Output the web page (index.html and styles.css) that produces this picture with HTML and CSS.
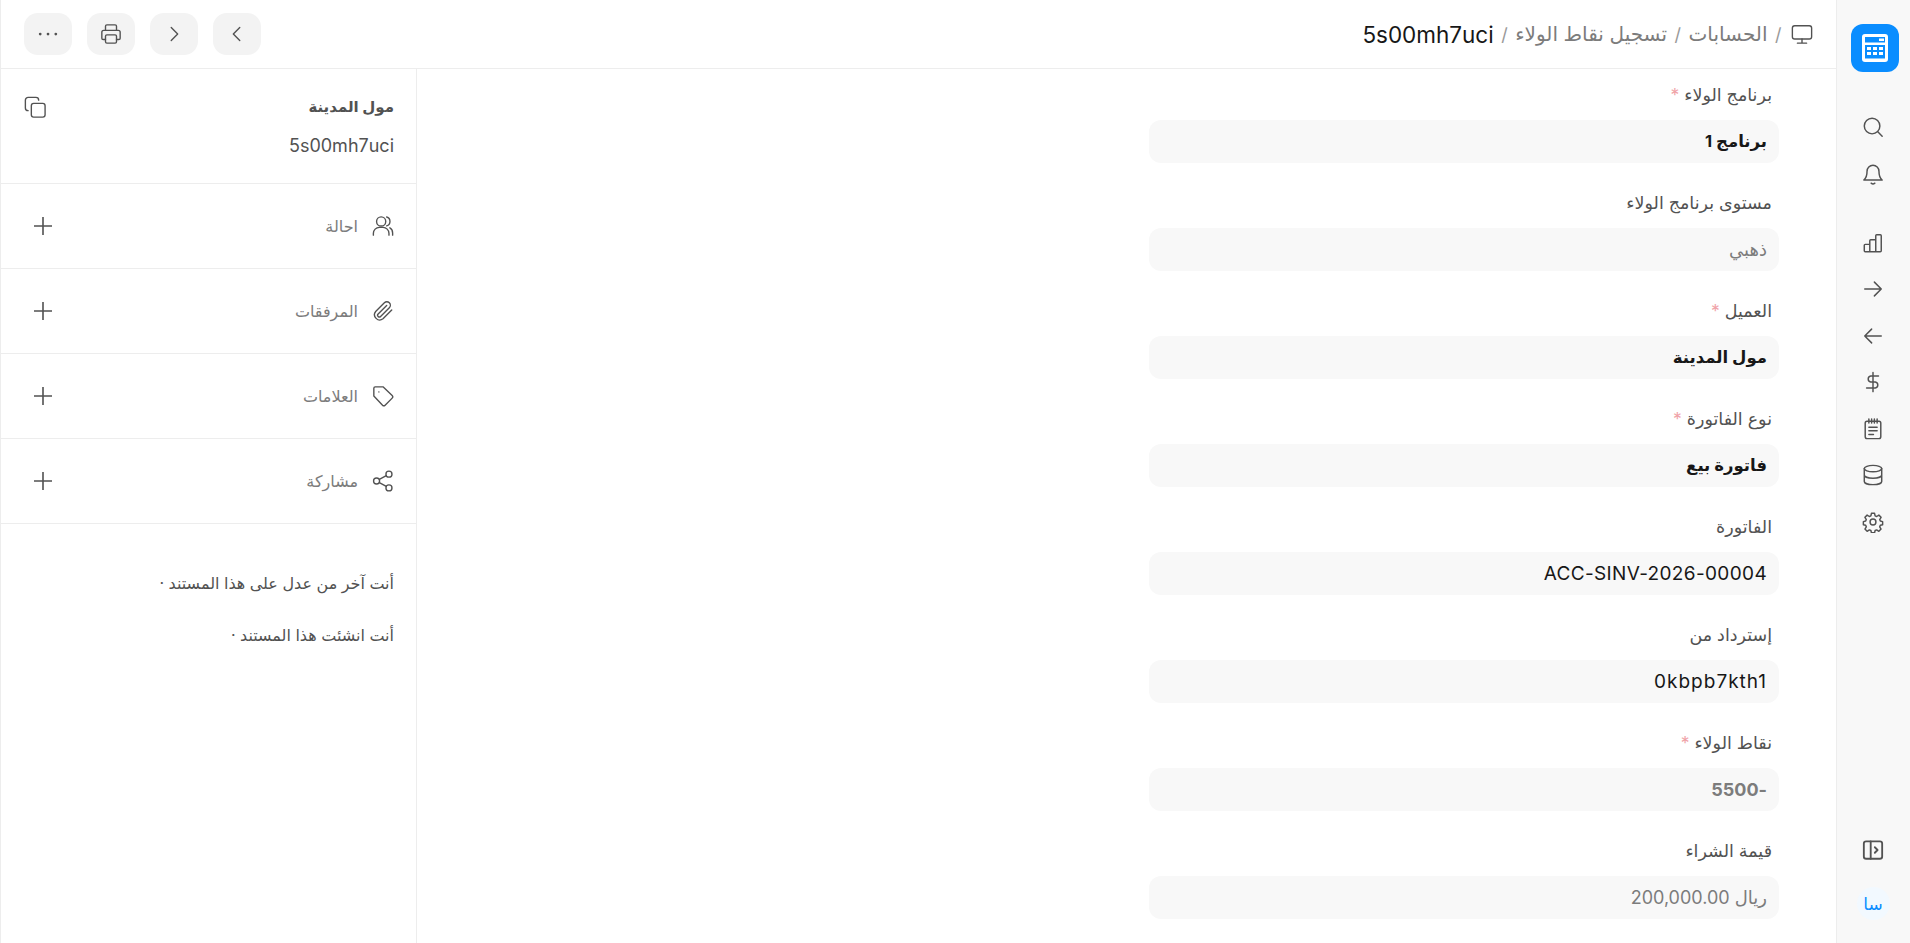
FILE: index.html
```html
<!DOCTYPE html>
<html lang="ar" dir="rtl">
<head>
  <meta charset="UTF-8">
  <meta name="viewport" content="width=device-width, initial-scale=1.0">
  <title>5s00mh7uci</title>
  <link rel="stylesheet" href="styles.css">
</head>
<body>
  <div class="app">
    <aside class="rail">
      <div class="logo">
        <svg width="32" height="32" viewBox="0 0 32 32" fill="none">
          <rect x="3" y="2" width="26" height="28" rx="3" fill="#fff"/>
          <rect x="6" y="5" width="20" height="5.5" fill="#0a8dff"/>
          <rect x="20" y="6.5" width="5" height="2.5" fill="#fff"/>
          <path d="M6 13h20v13.5H6z" fill="#0a8dff"/>
          <path d="M8 15h4v3H8zM14 15h4v3h-4zM20 15h4v3h-4zM8 20h4v3H8zM14 20h4v3h-4zM20 20h4v3h-4z" fill="#fff"/>
        </svg>
      </div>
      <div class="rail-group rail-top">
        <span class="rail-icon"><svg viewBox="0 0 24 24"><circle cx="11" cy="11" r="8.5"/><path d="M17.5 17.5 22 22"/></svg></span>
        <span class="rail-icon"><svg viewBox="0 0 24 24"><path d="M5.500 9a6.500 6.500 0 0 1 13 0c0 5 1 7.500 3.500 9.500H2c2.500-2 3.500-4.500 3.500-9.500z"/><path d="M10 22c1 .8 3 .8 4 0"/></svg></span>
      </div>
      <div class="rail-group rail-mid">
        <span class="rail-icon"><svg viewBox="0 0 24 24"><path d="M2.500 20.500v-6a1 1 0 0 1 1-1h5v8h-5a1 1 0 0 1-1-1zM8.500 13.500V9.500a1 1 0 0 1 1-1h5.500v13H8.500M15 21.500V4a1 1 0 0 1 1-1h4a1 1 0 0 1 1 1v16.500a1 1 0 0 1-1 1z"/></svg></span>
        <span class="rail-icon"><svg viewBox="0 0 24 24"><path d="M3 12h18M13.500 4.500 21 12l-7.500 7.500"/></svg></span>
        <span class="rail-icon"><svg viewBox="0 0 24 24"><path d="M21 12H3M10.500 4.500 3 12l7.500 7.500"/></svg></span>
        <span class="rail-icon"><svg viewBox="0 0 24 24"><path d="M12 1.500v21M18 5.500H9.500a3.300 3.300 0 0 0 0 6.500h5a3.300 3.300 0 0 1 0 6.500H5"/></svg></span>
        <span class="rail-icon"><svg viewBox="0 0 24 24"><rect x="3.500" y="3.500" width="17" height="19" rx="2"/><path d="M7.500 1v4.500M10.500 1v4.500M13.500 1v4.500M16.500 1v4.500M7.500 10h9M7.500 14h9M7.500 18h5"/></svg></span>
        <span class="rail-icon"><svg viewBox="0 0 24 24"><ellipse cx="12" cy="5" rx="9.500" ry="3.500"/><path d="M2.500 5v14c0 2 4.300 3.500 9.500 3.500s9.500-1.500 9.500-3.500V5M2.500 12c0 2 4.300 3.500 9.500 3.500s9.500-1.500 9.500-3.500"/></svg></span>
        <span class="rail-icon"><svg viewBox="0 0 24 24"><circle cx="12" cy="12" r="3.200"/><path d="M10.300 2.500h3.400l.6 2.800 1.700.7 2.400-1.500 2.400 2.400-1.500 2.400.7 1.700 2.500.6v3.400l-2.500.6-.7 1.700 1.500 2.400-2.400 2.400-2.400-1.500-1.700.7-.6 2.500h-3.400l-.6-2.500-1.700-.7-2.400 1.500-2.400-2.400 1.500-2.400-.7-1.700-2.500-.6v-3.400l2.500-.6.7-1.700-1.500-2.400 2.400-2.400 2.400 1.500 1.700-.7z"/></svg></span>
      </div>
      <div class="rail-group rail-bottom">
        <span class="rail-icon"><svg viewBox="0 0 24 24"><rect x="2" y="2.500" width="20" height="19" rx="2.500" stroke-width="2"/><path d="M9.500 2.500v19" stroke-width="2"/><path d="m14 9 3 3-3 3" stroke-width="2"/></svg></span>
        <span class="avatar">سا</span>
      </div>
    </aside>

    <div class="page">
      <header class="topbar">
        <nav class="crumbs">
          <svg class="crumb-icon" viewBox="0 0 24 24"><rect x="1.500" y="3" width="21" height="14.500" rx="2.500"/><path d="M12 17.500V22M7 22h10"/></svg>
          <span class="sep">/</span>
          <span>الحسابات</span>
          <span class="sep">/</span>
          <span>تسجيل نقاط الولاء</span>
          <span class="sep">/</span>
          <span class="crumb-current">5s00mh7uci</span>
        </nav>
        <div class="actions">
          <button class="btn"><svg viewBox="0 0 24 24"><path d="m15 5-7 7 7 7"/></svg></button>
          <button class="btn"><svg viewBox="0 0 24 24"><path d="m9 5 7 7-7 7"/></svg></button>
          <button class="btn"><svg viewBox="0 0 24 24"><path d="M6 8V3.500A1.500 1.500 0 0 1 7.500 2h9A1.500 1.500 0 0 1 18 3.500V8"/><path d="M6 18H3.500A1.500 1.500 0 0 1 2 16.500V10a2 2 0 0 1 2-2h16a2 2 0 0 1 2 2v6.500a1.500 1.500 0 0 1-1.500 1.500H18"/><rect x="6" y="13" width="12" height="9" rx="1.500"/></svg></button>
          <button class="btn"><svg viewBox="0 0 24 24"><circle cx="3.500" cy="12" r="1.500" class="dot"/><circle cx="12" cy="12" r="1.500" class="dot"/><circle cx="20.500" cy="12" r="1.500" class="dot"/></svg></button>
        </div>
      </header>

      <div class="content">
        <main class="form">
          <div class="field">
            <label>برنامج الولاء <span class="req">*</span></label>
            <div class="control strong">برنامج 1</div>
          </div>
          <div class="field">
            <label>مستوى برنامج الولاء</label>
            <div class="control muted">ذهبي</div>
          </div>
          <div class="field">
            <label>العميل <span class="req">*</span></label>
            <div class="control strong">مول المدينة</div>
          </div>
          <div class="field">
            <label>نوع الفاتورة <span class="req">*</span></label>
            <div class="control strong">فاتورة بيع</div>
          </div>
          <div class="field">
            <label>الفاتورة</label>
            <div class="control">ACC-SINV-2026-00004</div>
          </div>
          <div class="field">
            <label>إسترداد من</label>
            <div class="control wide">0kbpb7kth1</div>
          </div>
          <div class="field">
            <label>نقاط الولاء <span class="req">*</span></label>
            <div class="control strong-muted">-5500</div>
          </div>
          <div class="field">
            <label>قيمة الشراء</label>
            <div class="control muted">ريال 200,000.00</div>
          </div>
        </main>

        <aside class="side">
          <section class="side-head">
            <div class="side-title">
              <h2>مول المدينة</h2>
              <p>5s00mh7uci</p>
            </div>
            <svg class="copy" viewBox="0 0 24 24"><rect x="8" y="8" width="15" height="15" rx="2.500"/><path d="M4.500 16A3 3 0 0 1 1.500 13V4.500a3 3 0 0 1 3-3H13a3 3 0 0 1 3 3"/></svg>
          </section>
          <section class="side-row">
            <svg viewBox="0 0 24 24"><circle cx="10" cy="7" r="5"/><path d="M1.500 22v-2a6.500 6.500 0 0 1 6.500-6.500h4a6.500 6.500 0 0 1 6.500 6.500v2M16 2.200a5 5 0 0 1 0 9.600M19.500 14c2 1 3 3 3 5.500V22"/></svg>
            <span>احالة</span>
            <svg class="plus" viewBox="0 0 18 18"><path d="M9 0v18M0 9h18"/></svg>
          </section>
          <section class="side-row">
            <svg viewBox="0 0 24 24"><path d="M21.500 11 12 20.500a5.700 5.700 0 0 1-8-8L13.500 3a3.800 3.800 0 0 1 5.400 5.400l-9.500 9.500a1.900 1.900 0 0 1-2.700-2.700L16 6"/></svg>
            <span>المرفقات</span>
            <svg class="plus" viewBox="0 0 18 18"><path d="M9 0v18M0 9h18"/></svg>
          </section>
          <section class="side-row">
            <svg viewBox="0 0 24 24"><path d="M2 3.500A1.500 1.500 0 0 1 3.500 2H12l10 9.500a2 2 0 0 1 0 2.800L14.300 22a2 2 0 0 1-2.800 0L2 12z"/><circle cx="7.500" cy="7.500" r=".8" class="dot"/></svg>
            <span>العلامات</span>
            <svg class="plus" viewBox="0 0 18 18"><path d="M9 0v18M0 9h18"/></svg>
          </section>
          <section class="side-row">
            <svg viewBox="0 0 24 24"><circle cx="18.500" cy="4.500" r="3.300"/><circle cx="5" cy="12" r="3.300"/><circle cx="18.500" cy="19.500" r="3.300"/><path d="m8 10.300 7.600-4.200M8 13.700l7.600 4.200"/></svg>
            <span>مشاركة</span>
            <svg class="plus" viewBox="0 0 18 18"><path d="M9 0v18M0 9h18"/></svg>
          </section>
          <section class="activity">
            <p>أنت آخر من عدل على هذا المستند ·</p>
            <p>أنت انشئت هذا المستند ·</p>
          </section>
        </aside>
      </div>
    </div>
  </div>
</body>
</html>
```

FILE: styles.css
```css
* {
  box-sizing: border-box;
}
html, body {
  margin: 0;
  height: 100%;
  overflow: hidden;
}
body {
  font-family: Inter, "Noto Sans", "DejaVu Sans", sans-serif;
  font-size: 16px;
  color: #525252;
  background: #fff;
}
svg {
  fill: none;
  stroke: #525252;
  stroke-width: 1.5;
  stroke-linecap: round;
  stroke-linejoin: round;
}
.dot {
  fill: #525252;
  stroke: none;
}
.app {
  display: flex;
  height: 943px;
}

/* right rail */
.rail {
  width: 74px;
  flex: none;
  display: flex;
  flex-direction: column;
  align-items: center;
  padding: 24px 0 0 3px;
  background: #f8f8f8;
  border-left: 1px solid #ededed;
}
.logo {
  width: 48px;
  height: 48px;
  border-radius: 12px;
  background: #0a8dff;
  display: flex;
  align-items: center;
  justify-content: center;
  flex: none;
}
.logo svg {
  stroke: none;
}
.rail-group {
  display: flex;
  flex-direction: column;
  align-items: center;
  gap: 24.500px;
}
.rail-top {
  margin-top: 44px;
}
.rail-mid {
  margin-top: 47px;
}
.rail-bottom {
  margin-top: auto;
  padding-bottom: 23px;
  gap: 26px;
}
.rail-icon {
  width: 22px;
  height: 22px;
  display: block;
  margin-left: -4px;
}
.rail-icon svg {
  width: 22px;
  height: 22px;
  display: block;
  stroke-width: 1.600;
}
.avatar {
  width: 33px;
  height: 33px;
  margin-right: 4px;
  border-radius: 50%;
  background: #f2f9ff;
  color: #0a8dff;
  font-size: 17px;
  display: flex;
  align-items: center;
  justify-content: center;
}

/* page */
.page {
  flex: 1;
  min-width: 0;
  display: flex;
  flex-direction: column;
  border-left: 1px solid #ededed;
}
.topbar {
  height: 69px;
  flex: none;
  display: flex;
  align-items: center;
  justify-content: space-between;
  padding: 0 23px 0 23px;
  border-bottom: 1px solid #ededed;
}
.crumbs {
  display: flex;
  align-items: center;
  gap: 7.500px;
  font-size: 20px;
  color: #7c7c7c;
}
.crumb-icon {
  width: 22px;
  height: 22px;
  margin-left: 2px;
}
.sep {
  color: #999;
  font-size: 18px;
}
.crumb-current {
  color: #171717;
  font-size: 22.500px;
}
.actions {
  display: flex;
  gap: 15px;
}
.btn {
  width: 48px;
  height: 42px;
  border: none;
  border-radius: 14px;
  background: #f3f3f3;
  padding: 0;
  display: flex;
  align-items: center;
  justify-content: center;
  cursor: pointer;
}
.btn svg {
  width: 22px;
  height: 22px;
}

.content {
  flex: 1;
  display: flex;
  min-height: 0;
}

/* form column */
.form {
  flex: 1;
  padding: 11px 57px 0 0;
  overflow: hidden;
}
.field {
  width: 630px;
  margin-bottom: 25px;
}
.field label {
  display: block;
  height: 29px;
  line-height: 29px;
  margin-bottom: 11px;
  padding-right: 7px;
  font-size: 17.500px;
  color: #525252;
}
.req {
  color: #f0a3a8;
}
.control {
  height: 43px;
  line-height: 43px;
  padding: 0 12px;
  border-radius: 12px;
  background: #f8f8f8;
  font-size: 19px;
  letter-spacing: 0.35px;
  color: #171717;
}
.control.wide {
  letter-spacing: 1px;
}
.control.strong {
  font-size: 16.500px;
  letter-spacing: 0;
  font-weight: 700;
}
.control.muted {
  font-size: 18px;
  letter-spacing: 0;
  color: #7c7c7c;
}
.control.strong-muted {
  font-size: 18px;
  letter-spacing: 0;
  font-weight: 700;
  color: #7c7c7c;
}

/* left sidebar */
.side {
  width: 416px;
  flex: none;
  border-right: 1px solid #ededed;
}
.side-head {
  height: 115px;
  display: flex;
  justify-content: space-between;
  padding: 27px 22px 0 23px;
  border-bottom: 1px solid #ededed;
}
.side-title h2 {
  margin: 0;
  font-size: 15px;
  line-height: 22px;
  font-weight: 700;
  color: #525252;
}
.side-title p {
  margin: 17px 0 0;
  font-size: 18px;
  line-height: 22px;
}
.copy {
  width: 22px;
  height: 22px;
}
.side-row {
  height: 85px;
  display: flex;
  align-items: center;
  gap: 14px;
  padding: 0 22px 0 33px;
  border-bottom: 1px solid #ededed;
  font-size: 16px;
  color: #7c7c7c;
}
.side-row svg {
  width: 22px;
  height: 22px;
  flex: none;
}
.side-row .plus {
  width: 18px;
  height: 18px;
  margin-right: auto;
  stroke-width: 1.600;
}
.activity {
  padding: 48px 22px 0 0;
  font-size: 16px;
  color: #525252;
}
.activity p {
  margin: 0 0 30px;
  line-height: 22px;
}
```
